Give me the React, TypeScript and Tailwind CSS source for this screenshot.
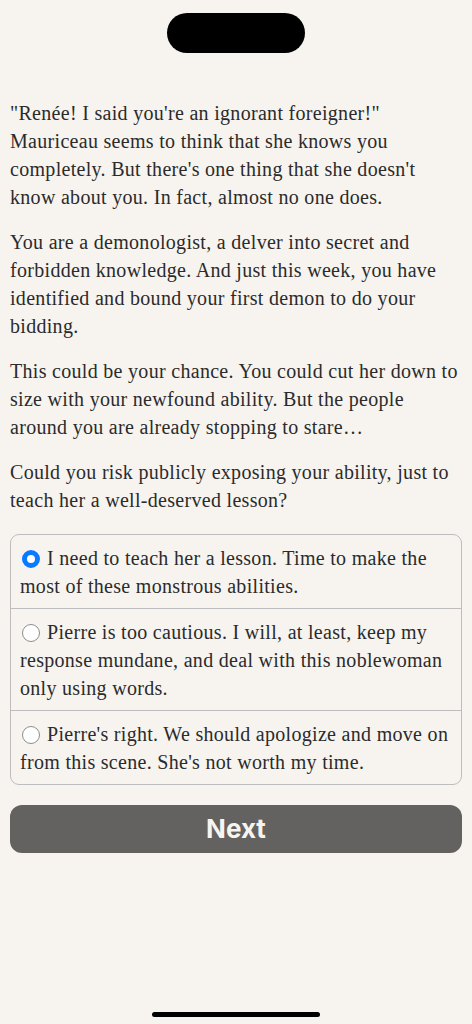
import React from "react";

const serif = { fontFamily: '"Liberation Serif", "DejaVu Serif", serif' };

function Radio({ on }: { on: boolean }) {
  return on ? (
    <span className="inline-block w-[18px] h-[18px] rounded-full border-[5px] border-[#0a7aff] bg-white align-[-3px] ml-[2px] mr-[7px]" />
  ) : (
    <span className="inline-block w-[18px] h-[18px] rounded-full border border-[#8e8e8e] bg-white align-[-3px] ml-[2px] mr-[7px]" />
  );
}

const options = [
  ["I need to teach her a lesson. Time to make the", "most of these monstrous abilities."],
  [
    "Pierre is too cautious. I will, at least, keep my",
    "response mundane, and deal with this noblewoman",
    "only using words.",
  ],
  ["Pierre's right. We should apologize and move on", "from this scene. She's not worth my time."],
];

const paragraphs = [
  [
    "\"Renée! I said you're an ignorant foreigner!\"",
    "Mauriceau seems to think that she knows you",
    "completely. But there's one thing that she doesn't",
    "know about you. In fact, almost no one does.",
  ],
  [
    "You are a demonologist, a delver into secret and",
    "forbidden knowledge. And just this week, you have",
    "identified and bound your first demon to do your",
    "bidding.",
  ],
  [
    "This could be your chance. You could cut her down to",
    "size with your newfound ability. But the people",
    "around you are already stopping to stare…",
  ],
  ["Could you risk publicly exposing your ability, just to", "teach her a well-deserved lesson?"],
];

function Lines({ lines }: { lines: string[] }) {
  return (
    <>
      {lines.map((l, i) => (
        <React.Fragment key={i}>
          {l}
          {i < lines.length - 1 && <br />}
        </React.Fragment>
      ))}
    </>
  );
}

export default function App() {
  const selected = 0;
  return (
    <div className="w-[472px] min-h-[1024px] bg-[#f7f4f0] flex flex-col">
      <div className="mt-[13px] mx-auto h-10 w-[138px] rounded-full bg-black" />
      <div
        className="px-[10px] pt-[46px] text-[#2b2b2b] text-[20px] leading-[28px] tracking-[0.3px]"
        style={serif}
      >
        {paragraphs.map((p, i) => (
          <p key={i} className="mb-[17px] whitespace-nowrap">
            <Lines lines={p} />
          </p>
        ))}
        <div className="mt-[20px] rounded-[9px] border border-[#bdbdbd] overflow-hidden">
          {options.map((o, i) => (
            <div
              key={i}
              className={"pl-[9px] pt-[9px] pb-[8px] whitespace-nowrap " + (i > 0 ? "border-t border-[#bdbdbd]" : "")}
            >
              <Radio on={i === selected} />
              <Lines lines={o} />
            </div>
          ))}
        </div>
        <button
          className="mt-[20px] w-full h-12 rounded-[12px] bg-[#636260] text-[#f7f4f0] text-[26px] font-bold tracking-normal"
          style={{ fontFamily: '"Inter", "Liberation Sans", sans-serif' }}
        >
          Next
        </button>
      </div>
      <div className="mt-auto mb-[7px] mx-auto h-[5px] w-[168px] rounded-full bg-black" />
    </div>
  );
}
